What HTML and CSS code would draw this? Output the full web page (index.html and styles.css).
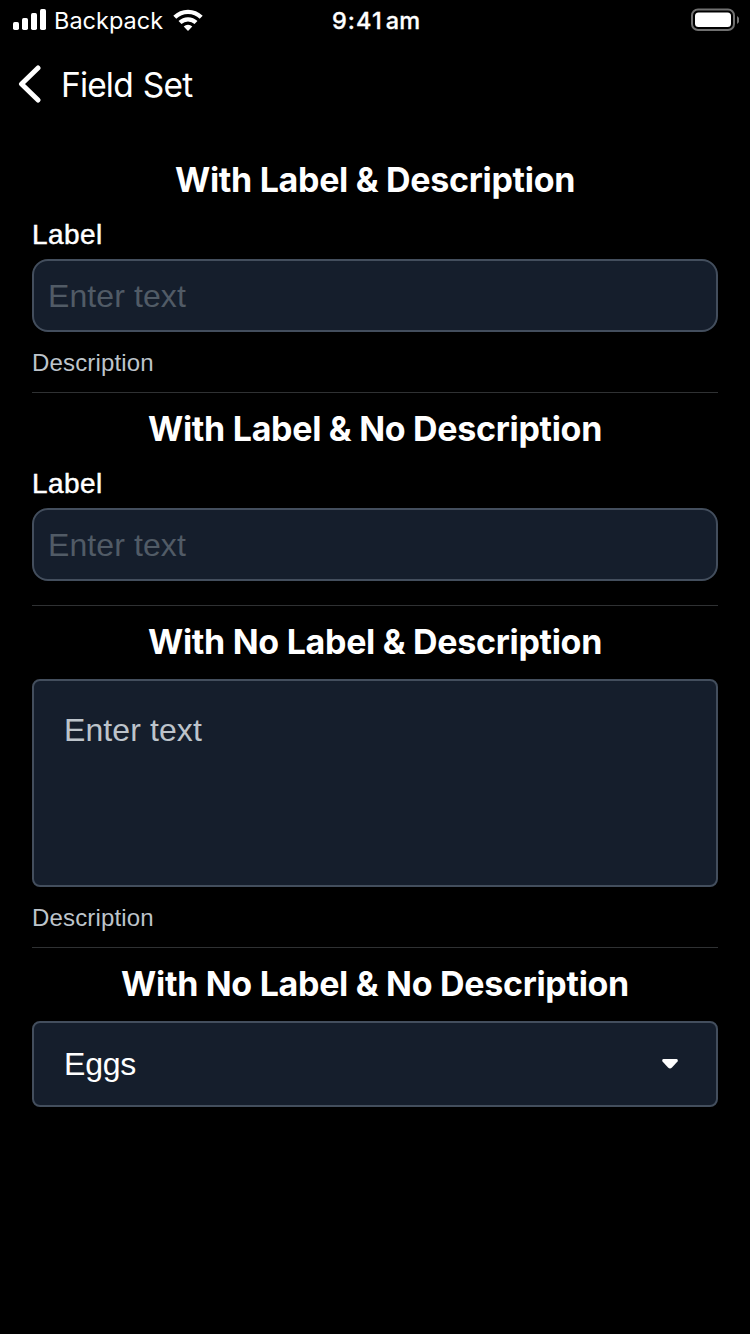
FILE: index.html
```
<!DOCTYPE html>
<html lang="en">
<head>
<meta charset="utf-8">
<title>Field Set</title>
<link rel="stylesheet" href="styles.css">
</head>
<body>
<header class="status">
  <div class="status-left">
    <svg class="signal" viewBox="0 0 34 22" width="34" height="22"><rect x="0" y="13" width="6" height="8" rx="1.700"/><rect x="9" y="9" width="6" height="12" rx="1.700"/><rect x="18" y="4" width="6" height="17" rx="1.700"/><rect x="27" y="0" width="6" height="21" rx="1.700"/></svg>
    <span class="carrier">Backpack</span>
    <svg class="wifi" viewBox="0 0 30 22" width="30" height="22"><path d="M15 22l-4.300-4.400a6 6 0 0 1 8.600 0z"/><path class="arc" d="M7 13.600A11.500 11.500 0 0 1 23 13.600M1.800 8.200A18.800 18.800 0 0 1 28.200 8.200"/></svg>
  </div>
  <span class="time"><span class="digits">9:41</span><span>am</span></span>
  <svg class="battery" viewBox="0 0 48 24" width="48" height="24"><rect class="case" x="1" y="1.500" width="42" height="20.500" rx="6"/><rect x="4" y="4.500" width="36" height="14.500" rx="3.500"/><path class="cap" d="M46 8q2.500 1.500 2.500 4t-2.500 4z"/></svg>
</header>
<nav class="nav">
  <svg class="back" viewBox="0 0 24 40" width="24" height="40"><path d="M20 4L3.500 20l16.500 16"/></svg>
  <span class="nav-title">Field Set</span>
</nav>
<main class="content">
  <section class="group first">
    <h2>With Label &amp; Description</h2>
    <div class="label">Label</div>
    <div class="input">Enter text</div>
    <div class="description">Description</div>
  </section>
  <section class="group second">
    <h2>With Label &amp; No Description</h2>
    <div class="label">Label</div>
    <div class="input">Enter text</div>
  </section>
  <section class="group third">
    <h2>With No Label &amp; Description</h2>
    <div class="textarea">Enter text</div>
    <div class="description">Description</div>
  </section>
  <section class="group fourth">
    <h2>With No Label &amp; No Description</h2>
    <div class="select"><span>Eggs</span><svg viewBox="0 0 18 12" width="18" height="12"><path d="M2.500 1h13q2 .5 1 2.500l-5.500 6q-2 2-4 0l-5.500-6q-1-2 1-2.500z"/></svg></div>
  </section>
</main>
</body>
</html>
```
FILE: styles.css
```
* { box-sizing: border-box; }
body { margin: 0; width: 750px; height: 1334px; overflow: hidden; background: #000; color: #fff; font-family: Inter, sans-serif; }
svg { display: block; fill: #fff; flex: none; }
.status { height: 40px; display: grid; grid-template-columns: 1fr auto 1fr; align-items: center; padding: 0 11px 0 13px; }
.status-left { display: flex; align-items: center; }
.signal { margin-bottom: 1px; }
.carrier { font-size: 23.5px; line-height: 38px; margin: 2px 10px 0 7px; letter-spacing: 0; }
.wifi .arc { fill: none; stroke: #fff; stroke-width: 4.2; }
.time { display: flex; gap: 3px; font-size: 23.5px; font-weight: 500; line-height: 38px; margin-top: 2px; -webkit-text-stroke: .3px #fff; }
.digits { letter-spacing: 1.1px; }
.battery { justify-self: end; margin-bottom: 1px; }
.battery .case { fill: none; stroke: #707070; stroke-width: 2; }
.battery .cap { fill: #707070; }
.nav { height: 88px; display: flex; align-items: center; padding-left: 18px; }
.back { fill: none; stroke: #fff; stroke-width: 5; stroke-linecap: round; stroke-linejoin: round; }
.nav-title { font-size: 33.5px; margin: 1px 0 0 19px; letter-spacing: -.85px; word-spacing: 1.5px; }
.content { padding: 0 32px; }
.group { border-bottom: 1px solid #2f3133; }
.first { height: 265px; padding-top: 28px; }
.second { height: 213px; padding-top: 12px; }
.third { height: 342px; padding-top: 12px; }
.fourth { padding-top: 12px; border: 0; }
h2 { margin: 0; font-size: 34px; line-height: 48px; font-weight: 700; text-align: center; white-space: nowrap; letter-spacing: -.3px; }
.label, .input, .description, .textarea, .select { font-family: "Liberation Sans", Arial, sans-serif; }
.label { margin-top: 13px; height: 42px; line-height: 35px; font-size: 28px; letter-spacing: .45px; -webkit-text-stroke: .45px #fff; }
.input { height: 73px; border: 2px solid #434e5d; border-radius: 16px; background: #151e2c; padding-left: 14px; line-height: 71px; font-size: 32px; letter-spacing: .1px; color: #515b66; }
.description { margin-top: 15px; font-size: 24px; line-height: 32px; letter-spacing: .15px; color: #bdc4cb; }
.textarea { margin-top: 13px; height: 208px; border: 2px solid #434e5d; border-radius: 8px; background: #151e2c; padding: 31px 30px; line-height: 36px; font-size: 32px; letter-spacing: .1px; color: #bdc4cb; }
.select { margin-top: 13px; height: 86px; border: 2px solid #434e5d; border-radius: 8px; background: #151e2c; padding: 0 37px 0 30px; display: flex; align-items: center; justify-content: space-between; font-size: 32px; letter-spacing: -.2px; }
```
